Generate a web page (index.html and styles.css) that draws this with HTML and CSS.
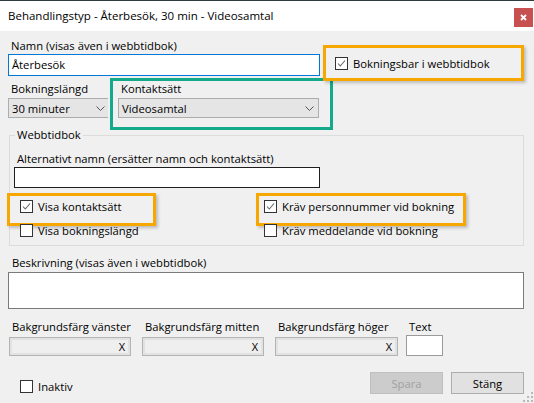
FILE: index.html
```html
<!DOCTYPE html>
<html lang="sv">
<head>
<meta charset="utf-8">
<title>Behandlingstyp</title>
<link rel="stylesheet" href="styles.css">
</head>
<body>
<div class="window">
  <div class="titlebar">
    <span class="title">Behandlingstyp - Återbesök, 30 min - Videosamtal</span>
    <button class="close" type="button" aria-label="Stäng">
      <svg width="7" height="7" viewBox="0 0 7 7"><path d="M1 1L6 6M6 1L1 6" stroke="#fff" stroke-width="1.8"/></svg>
    </button>
  </div>

  <div class="content">
    <div class="row-name">
      <div class="name-field">
        <div class="lbl">Namn (visas även i webbtidbok)</div>
        <div class="input input-focus">Återbesök</div>
      </div>
      <label class="check check-book hl hl-book">
        <span class="box"><svg width="11" height="11" viewBox="0 0 11 11"><path d="M2 5.5L4.3 8L9 2.5" fill="none" stroke="#666" stroke-width="1.1"/></svg></span>
        <span>Bokningsbar i webbtidbok</span>
      </label>
    </div>

    <div class="row-select">
      <div class="len-field">
        <div class="lbl">Bokningslängd</div>
        <div class="select select-len"><span>30 minuter</span>
          <svg width="9" height="5" viewBox="0 0 9 5"><path d="M0.5 0.5L4.5 4.5L8.5 0.5" fill="none" stroke="#555" stroke-width="1"/></svg>
        </div>
      </div>
      <div class="contact-field">
        <div class="lbl">Kontaktsätt</div>
        <div class="select select-contact"><span>Videosamtal</span>
          <svg width="9" height="5" viewBox="0 0 9 5"><path d="M0.5 0.5L4.5 4.5L8.5 0.5" fill="none" stroke="#555" stroke-width="1"/></svg>
        </div>
      </div>
    </div>

    <fieldset class="group">
      <legend>Webbtidbok</legend>
      <div class="lbl">Alternativt namn (ersätter namn och kontaktsätt)</div>
      <div class="input input-alt"></div>
      <div class="checks">
        <label class="check hl hl-visa">
          <span class="box"><svg width="11" height="11" viewBox="0 0 11 11"><path d="M2 5.5L4.3 8L9 2.5" fill="none" stroke="#666" stroke-width="1.1"/></svg></span>
          <span>Visa kontaktsätt</span>
        </label>
        <label class="check hl hl-pnr">
          <span class="box"><svg width="11" height="11" viewBox="0 0 11 11"><path d="M2 5.5L4.3 8L9 2.5" fill="none" stroke="#666" stroke-width="1.1"/></svg></span>
          <span>Kräv personnummer vid bokning</span>
        </label>
        <label class="check">
          <span class="box"></span>
          <span>Visa bokningslängd</span>
        </label>
        <label class="check">
          <span class="box"></span>
          <span>Kräv meddelande vid bokning</span>
        </label>
      </div>
    </fieldset>

    <div class="desc">
      <div class="lbl">Beskrivning (visas även i webbtidbok)</div>
      <div class="textarea"></div>
    </div>

    <div class="colors">
      <div class="color-field">
        <div class="lbl">Bakgrundsfärg vänster</div>
        <div class="color-box">X</div>
      </div>
      <div class="color-field">
        <div class="lbl">Bakgrundsfärg mitten</div>
        <div class="color-box">X</div>
      </div>
      <div class="color-field">
        <div class="lbl">Bakgrundsfärg höger</div>
        <div class="color-box color-box-wide">X</div>
      </div>
      <div class="color-field text-field">
        <div class="lbl">Text</div>
        <div class="text-box"></div>
      </div>
    </div>

    <div class="footer">
      <label class="check check-inactive">
        <span class="box"></span>
        <span>Inaktiv</span>
      </label>
      <div class="buttons">
        <button class="btn btn-disabled" type="button">Spara</button>
        <button class="btn" type="button">Stäng</button>
      </div>
    </div>
  </div>

  <svg class="grip" width="10" height="10" viewBox="0 0 10 10">
    <g fill="#b8b8b8">
      <rect x="8" y="0" width="2" height="2"/>
      <rect x="4" y="4" width="2" height="2"/><rect x="8" y="4" width="2" height="2"/>
      <rect x="0" y="8" width="2" height="2"/><rect x="4" y="8" width="2" height="2"/><rect x="8" y="8" width="2" height="2"/>
    </g>
  </svg>
</div>
</body>
</html>
```

FILE: styles.css
```css
* { box-sizing: border-box; }

html, body {
  margin: 0;
  padding: 0;
}

body {
  width: 534px;
  height: 403px;
  overflow: hidden;
  background: #f0f0f0;
  font-family: "Open Sans", "Noto Sans", sans-serif;
  font-size: 11.25px;
  color: #000;
}

.window {
  position: relative;
  width: 534px;
  height: 403px;
  display: flex;
  flex-direction: column;
  background: #f0f0f0;
}

/* Title bar */
.titlebar {
  flex: none;
  height: 31px;
  border-top: 1px solid #2e3b3e;
  background: #fff;
  display: flex;
  align-items: flex-start;
  padding-left: 8px;
}

.title {
  line-height: 30px;
  font-size: 11.5px;
  color: #000;
}

.close {
  margin-left: auto;
  margin-top: 7px;
  margin-right: 1px;
  width: 19px;
  height: 19px;
  padding: 0;
  border: none;
  background: #c75050;
  display: flex;
  align-items: center;
  justify-content: center;
}

/* Content */
.content {
  flex: 1;
  display: flex;
  flex-direction: column;
  padding: 0 10px 0 8px;
}

.lbl {
  line-height: 16px;
  padding-left: 3px;
  white-space: nowrap;
}

.input {
  background: #fff;
  border: 1px solid #7a7a7a;
  line-height: 20px;
  padding-left: 3px;
}

.input-focus {
  border-color: #0078d7;
}

/* Row 1 */
.row-name {
  display: flex;
  align-items: flex-end;
  margin-top: 7px;
}

.name-field {
  width: 312px;
}

.name-field .input {
  height: 22px;
}

.check {
  position: relative;
  display: flex;
  align-items: center;
  gap: 5px;
  height: 24px;
  white-space: nowrap;
}

.box {
  flex: none;
  width: 13px;
  height: 13px;
  border: 1px solid #333;
  background: #fff;
  display: flex;
  align-items: center;
  justify-content: center;
}

.check-book {
  margin-left: 15px;
  margin-bottom: 1px;
}

/* Highlight annotations drawn over the controls */
.hl::after {
  content: "";
  position: absolute;
  border: 3px solid #f6a800;
  box-shadow: 2px 2px 3px rgba(0, 0, 0, 0.22);
  pointer-events: none;
}

.hl-book::after {
  left: -12px;
  top: -6px;
  width: 195px;
  height: 30px;
}

.hl-visa::after {
  left: -13px;
  top: -1px;
  width: 143px;
  height: 27px;
}

.hl-pnr::after {
  left: -8px;
  top: -1px;
  width: 204px;
  height: 27px;
}

/* Row 2 */
.row-select {
  display: flex;
  align-items: flex-start;
  margin-top: 2px;
}

.len-field {
  width: 102px;
  padding-top: 3px;
}

.select {
  height: 20px;
  margin-top: 1px;
  background: #e5e5e5;
  border: 1px solid #adadad;
  display: flex;
  align-items: center;
  justify-content: space-between;
  padding: 0 4px 0 3px;
}

.select-len {
  width: 100px;
  border-right: none;
  padding-right: 3px;
}

.contact-field {
  width: 223px;
  border: 3px solid #14a98b;
  padding: 0 11px 9px 5px;
}

/* Webbtidbok group */
.group {
  margin: 0 0 0 1px;
  padding: 11px 0 3px 4px;
  border: 1px solid #dcdcdc;
  min-width: 0;
}

.group legend {
  line-height: 10px;
  padding: 0 2px;
  margin-left: 1px;
}

.input-alt {
  width: 306px;
  height: 21px;
  border-color: #1f1f1f;
}

.checks {
  display: grid;
  grid-template-columns: 244px auto;
  grid-auto-rows: 24px;
  margin-top: 6px;
  padding-left: 6px;
}

/* Description */
.desc {
  margin-top: 9px;
}

.desc .lbl {
  padding-left: 4px;
  margin-bottom: 1px;
}

.textarea {
  height: 37px;
  background: #fff;
  border: 1px solid #7a7a7a;
}

/* Colours */
.colors {
  display: flex;
  align-items: flex-end;
  margin-top: 10px;
  margin-left: 1px;
  gap: 11px;
}

.color-field .lbl {
  margin-bottom: 2px;
}

.color-box {
  width: 122px;
  height: 19px;
  background: #efefef;
  border: 1px solid #b4b4b4;
  box-shadow: inset 0 0 0 2px #e2e2e2;
  display: flex;
  align-items: center;
  justify-content: flex-end;
  padding-right: 5px;
  font-size: 11px;
}

.color-box-wide {
  width: 123px;
}

.text-field {
  margin-left: -3px;
}

.text-field .lbl {
  margin-bottom: 0;
}

.text-box {
  width: 37px;
  height: 21px;
  background: #fff;
  border: 1px solid #9a9a9a;
}

/* Footer */
.footer {
  display: flex;
  align-items: flex-start;
  margin-top: 16px;
}

.check-inactive {
  margin-left: 12px;
  margin-top: 2px;
}

.buttons {
  margin-left: auto;
  display: flex;
  gap: 8px;
}

.btn {
  width: 73px;
  height: 22px;
  padding: 0;
  font: inherit;
  background: #e1e1e1;
  border: 1px solid #adadad;
  color: #000;
}

.btn-disabled {
  background: #cccccc;
  border-color: #bfbfbf;
  color: #a0a0a0;
}

.grip {
  position: absolute;
  right: 1px;
  bottom: 1px;
}
```
